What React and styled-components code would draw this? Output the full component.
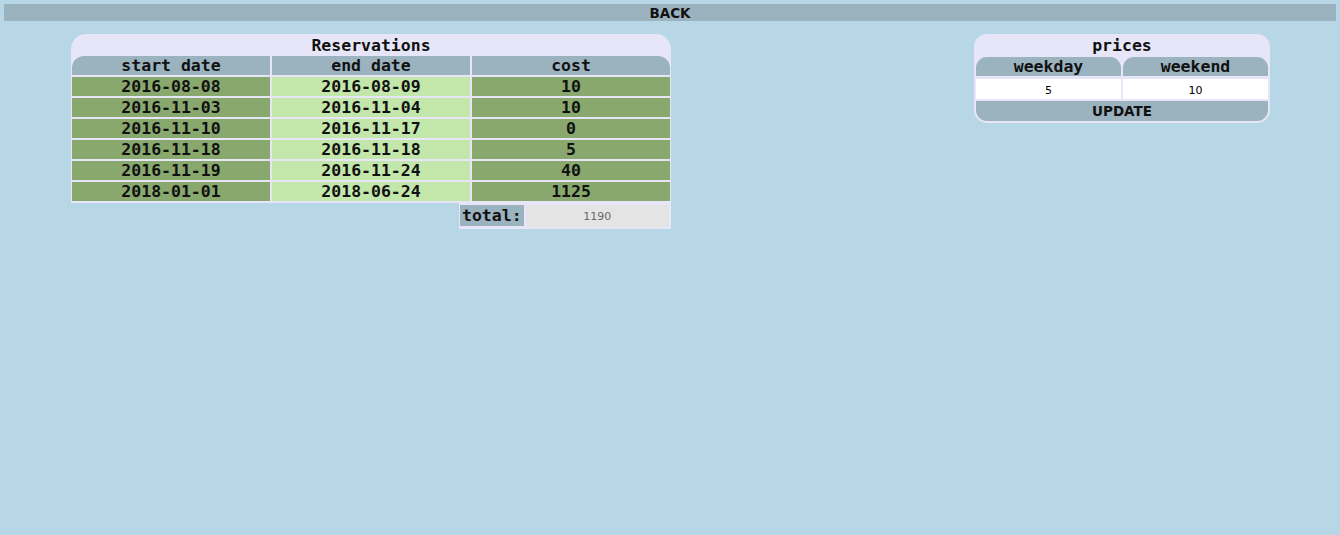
import React, { useState } from 'react';
import styled, { createGlobalStyle } from 'styled-components';

const GlobalStyle = createGlobalStyle`
  html, body {
    margin: 0;
    background: #b7d6e6;
  }
  body {
    padding: 4px;
    font-family: "DejaVu Sans", Verdana, sans-serif;
  }
`;

const sans = `"DejaVu Sans", Verdana, sans-serif`;
const mono = `"DejaVu Sans Mono", "Liberation Mono", monospace`;

const BackBar = styled.div`
  font: bold 13.5px ${sans};
  height: 17px;
  line-height: 18px;
  background: #9bb2bf;
  text-align: center;
  color: #111;
  cursor: pointer;
`;

const Main = styled.div`
  display: flex;
  justify-content: space-between;
  align-items: flex-start;
  padding: 13px 66px 0 67px;
`;

const Reservations = styled.div`
  display: flex;
  flex-direction: column;
  width: 600px;
`;

const Panel = styled.div`
  background: #e6e6f8;
  border-radius: ${p => (p.$closed ? '13px' : '15px 15px 0 0')};
  padding: ${p => p.$pad};
`;

const Title = styled.div`
  font: bold 16.5px ${mono};
  height: ${p => p.$h}px;
  line-height: ${p => p.$h + 1}px;
  text-align: center;
  color: #111;
`;

const Grid = styled.div`
  display: grid;
  grid-template-columns: repeat(${p => p.$cols}, 1fr);
  gap: 2px;
  margin-top: ${p => p.$top || 0}px;
`;

const Head = styled.div`
  font: bold 16.5px ${mono};
  height: 19px;
  line-height: 20px;
  background: #9bb2bf;
  text-align: center;
  color: #111;
  border-radius: ${p => p.$radius || '0'};
`;

const Cell = styled.div`
  font: bold 16.5px ${mono};
  height: 19px;
  line-height: 20px;
  background: ${p => (p.$light ? '#c3e6aa' : '#89a86e')};
  text-align: center;
  color: #111;
`;

const TotalBox = styled.div`
  align-self: flex-end;
  display: flex;
  gap: 2px;
  width: 209px;
  padding: 2px 2px 2px 1px;
  background: #e6e6f8;
`;

const TotalLabel = styled.div`
  font: bold 16.5px ${mono};
  height: 21px;
  line-height: 21px;
  padding: 0 2px;
  background: #9bb2bf;
  color: #111;
`;

const TotalValue = styled.div`
  font: 11px ${sans};
  flex: 1;
  height: 22px;
  line-height: 24px;
  background: #e4e4e4;
  text-align: center;
  color: #6a6a6a;
`;

const Prices = styled(Panel)`
  width: 292px;
`;

const PriceInput = styled.input`
  font: 11px ${sans};
  box-sizing: border-box;
  width: 100%;
  height: 20px;
  border: none;
  outline: none;
  padding: 2px 0 0;
  background: #fff;
  text-align: center;
  color: #000;
`;

const UpdateButton = styled.div`
  font: bold 13.5px ${sans};
  margin-top: 2px;
  height: 20px;
  line-height: 20px;
  background: #9bb2bf;
  border-radius: 0 0 11px 11px;
  text-align: center;
  color: #111;
  cursor: pointer;
`;

const reservations = [
  { start: '2016-08-08', end: '2016-08-09', cost: 10 },
  { start: '2016-11-03', end: '2016-11-04', cost: 10 },
  { start: '2016-11-10', end: '2016-11-17', cost: 0 },
  { start: '2016-11-18', end: '2016-11-18', cost: 5 },
  { start: '2016-11-19', end: '2016-11-24', cost: 40 },
  { start: '2018-01-01', end: '2018-06-24', cost: 1125 },
];

export default function App() {
  const [weekday, setWeekday] = useState('5');
  const [weekend, setWeekend] = useState('10');
  const total = reservations.reduce((sum, r) => sum + r.cost, 0);

  return (
    <>
      <GlobalStyle />
      <BackBar>BACK</BackBar>
      <Main>
        <Reservations>
          <Panel $pad="0 1px 2px">
            <Title $h={22}>Reservations</Title>
            <Grid $cols={3}>
              <Head $radius="12px 0 0 0">start date</Head>
              <Head>end date</Head>
              <Head $radius="0 12px 0 0">cost</Head>
              {reservations.map(r => (
                <React.Fragment key={r.start}>
                  <Cell>{r.start}</Cell>
                  <Cell $light>{r.end}</Cell>
                  <Cell>{r.cost}</Cell>
                </React.Fragment>
              ))}
            </Grid>
          </Panel>
          <TotalBox>
            <TotalLabel>total:</TotalLabel>
            <TotalValue>{total}</TotalValue>
          </TotalBox>
        </Reservations>

        <Prices $closed $pad="0 2px 2px">
          <Title $h={23}>prices</Title>
          <Grid $cols={2}>
            <Head $radius="11px 11px 0 0">weekday</Head>
            <Head $radius="11px 11px 0 0">weekend</Head>
          </Grid>
          <Grid $cols={2} $top={3}>
            <PriceInput value={weekday} onChange={e => setWeekday(e.target.value)} />
            <PriceInput value={weekend} onChange={e => setWeekend(e.target.value)} />
          </Grid>
          <UpdateButton>UPDATE</UpdateButton>
        </Prices>
      </Main>
    </>
  );
}
